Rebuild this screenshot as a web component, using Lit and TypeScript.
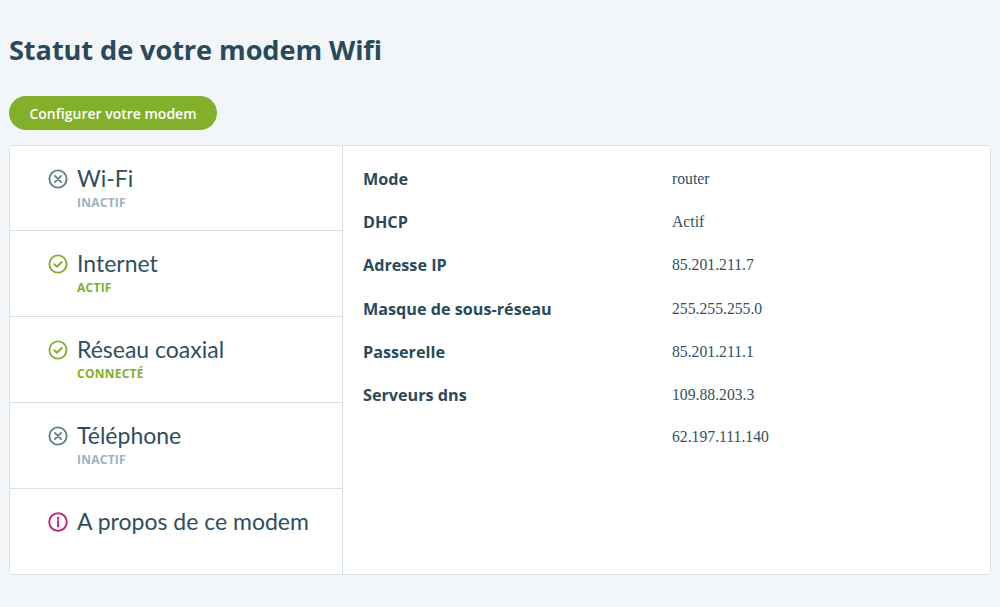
import { LitElement, html, css, svg } from "lit";
import { customElement } from "lit/decorators.js";

const icons: Record<string, unknown> = {
  off: svg`<circle cx="10" cy="10" r="8.6"/><path d="M6.9 6.9l6.2 6.2M13.1 6.9l-6.2 6.2"/>`,
  on: svg`<circle cx="10" cy="10" r="8.6"/><path d="M6.2 10.3l2.7 2.4 4.9-4.7"/>`,
  info: svg`<circle cx="10" cy="10" r="8.8"/><path d="M10 9v5.6M10 5.4v1.7"/>`,
};

const items = [
  { name: "Wi-Fi", icon: "off", status: "INACTIF", cls: "grey" },
  { name: "Internet", icon: "on", status: "ACTIF", cls: "green" },
  { name: "Réseau coaxial", icon: "on", status: "CONNECTÉ", cls: "green" },
  { name: "Téléphone", icon: "off", status: "INACTIF", cls: "grey" },
  { name: "A propos de ce modem", icon: "info", status: "", cls: "pink" },
];

const rows = [
  ["Mode", "router"],
  ["DHCP", "Actif"],
  ["Adresse IP", "85.201.211.7"],
  ["Masque de sous-réseau", "255.255.255.0"],
  ["Passerelle", "85.201.211.1"],
  ["Serveurs dns", "109.88.203.3"],
];

@customElement("app-root")
export class AppRoot extends LitElement {
  static styles = css`
    :host {
      display: block;
      height: 607px;
      overflow: hidden;
      box-sizing: border-box;
      padding: 33px 9px 0;
      background: #f2f6f9;
      color: #2a4a5a;
      font-family: "Open Sans", "Liberation Sans", sans-serif;
      font-variant-ligatures: none;
    }
    h1 {
      margin: 0;
      font-size: 27.2px;
      line-height: 34px;
      font-weight: 700;
      letter-spacing: -0.1px;
      color: #2a4a5a;
    }
    .btn {
      display: inline-flex;
      align-items: center;
      justify-content: center;
      box-sizing: border-box;
      width: 208px;
      height: 34px;
      margin-top: 29px;
      border: 0;
      padding: 0;
      border-radius: 17px;
      background: #82b02a;
      color: #fff;
      font: 600 14px "Open Sans", sans-serif;
    }
    .card {
      display: grid;
      grid-template-columns: 333px 1fr;
      box-sizing: border-box;
      width: 982px;
      height: 430px;
      margin-top: 15px;
      border: 1px solid #d8e3ea;
      border-radius: 4px;
      background: #fff;
    }
    .side {
      border-right: 1px solid #d3e0e6;
      display: flex;
      flex-direction: column;
    }
    .item {
      box-sizing: border-box;
      height: 86px;
      padding: 19px 0 0 38px;
      border-bottom: 1px solid #d3e0e6;
      display: grid;
      grid-template-columns: 20px 1fr;
      column-gap: 9px;
      align-content: start;
    }
    .item:first-child {
      height: 85px;
    }
    .item:last-child {
      border-bottom: 0;
    }
    .item svg {
      width: 20px;
      height: 20px;
      margin-top: 4px;
      fill: none;
      stroke-width: 1.9;
      stroke-linecap: round;
      stroke-linejoin: round;
    }
    .name {
      font-family: "Lato", sans-serif;
      font-size: 23px;
      line-height: 26px;
      font-weight: 400;
      color: #2f4f5f;
    }
    .status {
      grid-column: 2;
      margin-top: 5px;
      font-size: 12px;
      line-height: 14px;
      font-weight: 700;
      letter-spacing: 0.25px;
    }
    .grey svg { stroke: #647f8c; }
    .green svg { stroke: #82b02a; }
    .pink svg { stroke: #c3257a; }
    .grey .status { color: #9db2be; }
    .green .status { color: #82b02a; }
    .info {
      padding: 11.2px 20px 0;
      display: grid;
      grid-template-columns: 309px 1fr;
      grid-auto-rows: 43.3px;
      align-items: center;
    }
    .label {
      font-size: 16.2px;
      font-weight: 700;
      color: #2a4a5a;
    }
    .value {
      font-family: "Liberation Serif", serif;
      font-size: 15.7px;
      color: #33505f;
    }
    .extra {
      grid-column: 2;
      margin-top: -3px;
    }
  `;

  render() {
    return html`
      <h1>Statut de votre modem Wifi</h1>
      <button class="btn">Configurer votre modem</button>
      <div class="card">
        <div class="side">
          ${items.map(
            (i) => html`<div class="item ${i.cls}">
              <svg viewBox="0 0 20 20">${icons[i.icon]}</svg>
              <span class="name">${i.name}</span>
              ${i.status ? html`<span class="status">${i.status}</span>` : ""}
            </div>`
          )}
        </div>
        <div class="info">
          ${rows.map(
            ([l, v]) => html`<span class="label">${l}</span><span class="value">${v}</span>`
          )}
          <span class="value extra">62.197.111.140</span>
        </div>
      </div>
    `;
  }
}
